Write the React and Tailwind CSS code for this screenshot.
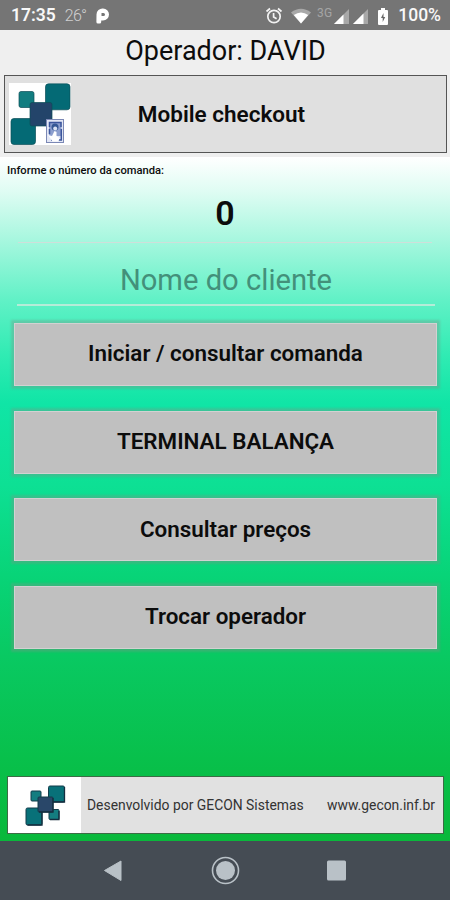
const ACTIONS = [
  "Iniciar / consultar comanda",
  "TERMINAL BALANÇA",
  "Consultar preços",
  "Trocar operador",
];

function StatusBar() {
  return (
    <div className="flex h-[30px] shrink-0 items-center bg-[#757575] pl-[11px] pr-[9px] pt-[2px] text-[#f8f8f8]">
      <span className="text-[17.5px] font-semibold leading-none">17:35</span>
      <span className="ml-[9px] text-[16px] font-light leading-none tracking-[-0.7px] text-[#d0d0d0]">26°</span>
      <svg className="ml-[10px]" width="14" height="16" viewBox="0 0 14 16">
        <path fill="#fff" fillRule="evenodd" d="M.5 6.500A6 6 0 0 1 7 .5a6 6 0 0 1 0 12H5.200V14a1.600 1.600 0 0 1-1.600 1.600H2A1.600 1.600 0 0 1 .4 14zM5.500 5v3h2a1.500 1.500 0 0 0 0-3z" />
      </svg>
      <div className="ml-auto flex items-center">
        <svg width="18" height="18" viewBox="0 0 18 18" fill="none" stroke="#f2f2f2" strokeWidth="1.700">
          <circle cx="9" cy="9.500" r="6.200" />
          <path d="M1.500 4.500l3.500-3M16.500 4.500l-3.500-3M8.600 6v4l3 1.800" />
        </svg>
        <svg className="ml-[8px]" width="20" height="16" viewBox="0 0 20 16">
          <path fill="#a8a8a8" d="M0 4.500Q10-3 20 4.500L10 15.500z" />
          <path fill="#fff" d="M2.800 7Q10 1.800 17.200 7L10 15.500z" />
        </svg>
        <span className="-mt-[6px] ml-[6px] text-[12px] leading-none tracking-[0.2px] text-[#a5a5a5]">3G</span>
        <svg className="ml-[2px] mt-[1px]" width="15" height="15" viewBox="0 0 15 15">
          <path fill="#a8a8a8" d="M15 0v15H0z" />
          <path fill="#fff" d="M9.500 5.500V15H0z" />
        </svg>
        <svg className="ml-[4px] mt-[1px]" width="15" height="15" viewBox="0 0 15 15">
          <path fill="#a8a8a8" d="M15 0v15H0z" />
          <path fill="#fff" d="M10.500 4.500V15H0z" />
        </svg>
        <svg className="ml-[10px]" width="10" height="17" viewBox="0 0 10 17">
          <path fill="#fff" d="M3 0h4v2h2a1 1 0 0 1 1 1v13a1 1 0 0 1-1 1H1a1 1 0 0 1-1-1V3a1 1 0 0 1 1-1h2z" />
          <path fill="#666" d="M5.500 5L3 10h1.700v4L7.200 9H5.500z" />
        </svg>
        <span className="ml-[10px] text-[17.5px] font-medium leading-none">100%</span>
      </div>
    </div>
  );
}

function HeaderLogo() {
  return (
    <svg width="62" height="62" viewBox="0 0 62 62" className="bg-white">
      <g stroke="#0b4d58" strokeWidth="0.700">
        <rect x="10" y="8.500" width="15" height="16" rx="2" fill="#117d80" />
        <rect x="36.500" y="0.800" width="24.500" height="26" rx="3" fill="#046a75" />
        <rect x="2" y="35.500" width="24.500" height="26" rx="3" fill="#046a75" />
        <rect x="21" y="19.500" width="22" height="23.500" rx="2" fill="#23446a" />
      </g>
      <rect x="37.500" y="36.500" width="17" height="23" fill="#e2e6f4" stroke="#7b88b5" />
      <rect x="40" y="39" width="12.500" height="14" fill="#8d9fce" />
      <path d="M40.500 44v-4.500H52V44M40.500 46v5M52.300 46v11H42" fill="none" stroke="#3a559c" strokeWidth="1.500" />
      <circle cx="46" cy="44" r="3.500" fill="#345794" />
      <circle cx="46.200" cy="45.500" r="2" fill="#d8e1f3" />
      <path d="M39 52l4 1 2.500-5 2 1v4l3 2-1 3.500h-6z" fill="#fff" />
    </svg>
  );
}

function FooterLogo() {
  return (
    <svg width="73" height="56" viewBox="0 0 73 56" className="shrink-0 bg-white">
      <g stroke="#123c4b" strokeWidth="1">
        <rect x="23" y="14" width="10" height="10" rx="1" fill="#147d80" />
        <rect x="40.500" y="9" width="16" height="16" rx="1.500" fill="#087179" />
        <rect x="18" y="31" width="16" height="17" rx="1.500" fill="#087179" />
        <rect x="41" y="32.500" width="10" height="10" rx="1" fill="#147d80" />
        <rect x="30" y="20" width="15" height="15" rx="1" fill="#294769" />
      </g>
      <path d="M56.500 10v15H45M34 35v13H19.500M45 21v14H31M51 34v8.500h-9" fill="none" stroke="#142e3f" strokeWidth="1.300" />
    </svg>
  );
}

function NavBar() {
  return (
    <div className="h-[59px] shrink-0 bg-[#454c54]">
      <svg width="450" height="59" viewBox="0 0 450 59" fill="#b9c1c7">
        <path d="M104.500 29.500L121 20v19.500z" stroke="#b9c1c7" strokeWidth="1" strokeLinejoin="round" />
        <circle cx="225.500" cy="29.500" r="13" fill="none" stroke="#b9c1c7" strokeWidth="1.600" />
        <circle cx="225.500" cy="29.500" r="9.500" />
        <rect x="327" y="19.500" width="19" height="20" rx="1.500" />
      </svg>
    </div>
  );
}

export default function App() {
  return (
    <div className="flex h-[900px] w-[450px] flex-col overflow-hidden bg-[#efefef] font-['Roboto',sans-serif] text-[#0c0c0c]">
      <StatusBar />

      <div className="h-[127px] shrink-0 px-1">
        <h1 className="h-[45px] whitespace-nowrap pl-[1px] pt-[1px] text-center text-[27px] leading-[40px]">Operador: DAVID</h1>
        <div className="grid h-[78px] w-[443px] grid-cols-[62px_1fr_62px] items-center border-[1.5px] border-[#555] bg-[#e0e0e0] px-[4px]">
          <HeaderLogo />
          <span className="whitespace-nowrap pr-[8px] pt-[1px] text-center text-[22.5px] font-semibold">Mobile checkout</span>
        </div>
      </div>

      <main className="flex h-[684px] shrink-0 flex-col bg-[linear-gradient(180deg,#ffffff_0%,#dffcf3_5%,#a8f7df_12%,#60f1c6_21%,#30ebb3_29%,#10e5a6_36%,#0de094_48%,#08d478_61%,#09c962_73%,#08c04b_88%,#09b83b_100%)]">
        <p className="h-[28px] pl-[7px] pt-[6px] text-[11.2px] font-medium leading-[16px]">Informe o número da comanda:</p>
        <div className="mx-[18px] h-[58px] border-b border-[#cfdfda] text-center text-[34px] font-semibold leading-[57px]">0</div>
        <div className="ml-[17px] mr-[15px] h-[63px] border-b-2 border-[#b5ecd8] pt-[14px] text-center text-[29.2px] leading-[46px] text-[#43907a]">Nome do cliente</div>

        <div className="ml-[14px] mt-[17px] flex w-[423px] flex-col gap-[24.3px]">
          {ACTIONS.map((label) => (
            <button
              key={label}
              className="h-[63.3px] whitespace-nowrap border border-[#d2d2d2] bg-[#c0c0c0] pb-[1px] text-[22.4px] font-semibold shadow-[0_0_2px_3px_rgba(120,150,135,0.4)]"
            >
              {label}
            </button>
          ))}
        </div>

        <footer className="mx-[7px] mb-[7px] mt-auto flex h-[58px] w-[437px] items-center border border-[#3c6b45] bg-[#e1e1e1] text-[13.9px] text-[#333]">
          <FooterLogo />
          <span className="ml-[6px] whitespace-nowrap">Desenvolvido por GECON Sistemas</span>
          <span className="ml-auto mr-[8px] whitespace-nowrap">www.gecon.inf.br</span>
        </footer>
      </main>

      <NavBar />
    </div>
  );
}
